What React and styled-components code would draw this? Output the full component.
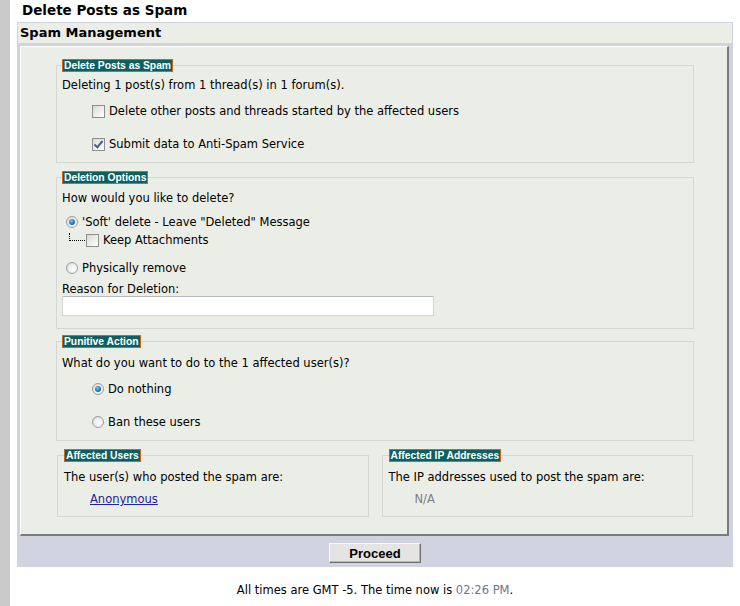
import React from 'react'
import styled, { createGlobalStyle } from 'styled-components'

const GlobalStyle = createGlobalStyle`
    html, body {
        margin:0;
        padding:0;
        background:#fff;
    }
    body {
        font-family:"DejaVu Sans", Verdana, sans-serif;
        font-size:11.5px;
        color:#000;
    }
`

const Page = styled.div`
    display:flex;
    min-height:606px;
`
const Rail = styled.div`
    width:10px;
    flex-shrink:0;
    background:#cacaca;
`
const Main = styled.main`
    flex:1;
    padding:0 7px;
`
const PageTitle = styled.h1`
    margin:0;
    height:22px;
    padding:2px 0 0 5px;
    box-sizing:border-box;
    font-size:13.5px;
    line-height:16px;
    font-weight:700;
`
const Frame = styled.div`
    border:1px solid #d1d3e0;
    background:#d1d3e0;
`
const FrameHeader = styled.div`
    height:20px;
    padding-left:2px;
    background:#ebeee7;
    font-size:13px;
    font-weight:700;
    line-height:20px;
`
const Panel = styled.div`
    margin:3px 3px 0 2px;
    padding:12px 33px 17px 35px;
    background:#ebeee7;
    border-top:1px solid #fff;
    border-left:1px solid #fff;
    border-right:2px solid #7b7b7b;
    border-bottom:2px solid #7b7b7b;
`
const Group = styled.fieldset`
    margin:${p => p.$mt || 0}px 0 0;
    padding:0 5px ${p => p.$pb || 0}px ${p => p.$pl || 5}px;
    min-width:0;
    border:1px solid #d5d8d1;
`
const Legend = styled.legend`
    margin-left:0;
    padding:0 1px;
    background:#0e5f5f;
    border:1px solid #c8661c;
    color:#fff;
    font-family:"Liberation Sans", Arial, sans-serif;
    font-size:10.3px;
    font-weight:700;
    line-height:11px;
`
const Line = styled.div`
    display:flex;
    align-items:center;
    gap:4px;
    height:14px;
    line-height:14px;
    margin-top:${p => p.$mt || 0}px;
    padding-left:${p => p.$indent || 0}px;
    white-space:nowrap;
`
const Check = styled.input.attrs({ type: 'checkbox' })`
    appearance:none;
    position:relative;
    width:13px;
    height:13px;
    margin:0;
    flex-shrink:0;
    border:1px solid #8e8f8f;
    background:linear-gradient(135deg, #d9d9d4 0%, #f4f4f1 70%, #fff 100%);
    box-sizing:border-box;

    &:checked::after{
        content:'';
        position:absolute;
        left:3px;
        top:0px;
        width:3px;
        height:7px;
        border:solid #4b5d97;
        border-width:0 2px 2px 0;
        transform:rotate(40deg);
    }
`
const Radio = styled.input.attrs({ type: 'radio' })`
    appearance:none;
    position:relative;
    width:12px;
    height:12px;
    margin:0;
    flex-shrink:0;
    border:1px solid #9c9c9c;
    border-radius:50%;
    background:radial-gradient(circle at 65% 65%, #fff 0%, #ececec 55%, #cfcfcf 100%);
    box-sizing:border-box;

    &:checked::after{
        content:'';
        position:absolute;
        left:2px;
        top:2px;
        width:6px;
        height:6px;
        border-radius:50%;
        background:radial-gradient(circle at 40% 35%, #7fc4ee 0%, #1f78b8 55%, #0d4f86 100%);
    }
`
const TreeLine = styled.span`
    align-self:flex-start;
    width:15px;
    height:7px;
    margin-left:7px;
    margin-right:-3px;
    border-left:1px dotted #000;
    border-bottom:1px dotted #000;
`
const TextInput = styled.input`
    display:block;
    width:372px;
    height:20px;
    margin:0;
    padding:0 3px;
    box-sizing:border-box;
    border:1px solid #d4d4d4;
    border-top-color:#b9b9b9;
    background:#fff;
    font:inherit;
`
const Pair = styled.div`
    display:grid;
    grid-template-columns:1fr 1fr;
    gap:13px;
    margin-top:8px;
    padding:0 1px;
`
const Link = styled.a`
    color:#22229c;
    text-decoration:underline;
`
const Muted = styled.span`
    color:#808080;
`
const ButtonBar = styled.div`
    display:flex;
    justify-content:center;
    padding:7px 0 3px;
`
const Button = styled.button`
    width:92px;
    height:20px;
    padding:0;
    background:#e4e4e2;
    border:1px solid;
    border-color:#fafafa #6f6f6f #6f6f6f #fafafa;
    box-shadow:inset -1px -1px 0 #b5b5b5;
    font-family:"Liberation Sans", Arial, sans-serif;
    font-size:13px;
    font-weight:700;
    color:#000;
`
const Footer = styled.div`
    margin-top:16px;
    text-align:center;
    line-height:14px;
`
const Time = styled.span`
    color:#78708f;
`

export default function App(){
    return (
        <Page>
            <GlobalStyle/>
            <Rail/>
            <Main>
                <PageTitle>Delete Posts as Spam</PageTitle>
                <Frame>
                    <FrameHeader>Spam Management</FrameHeader>
                    <Panel>
                        <Group $pb={11}>
                            <Legend>Delete Posts as Spam</Legend>
                            <Line $mt={6}>Deleting 1 post(s) from 1 thread(s) in 1 forum(s).</Line>
                            <Line $mt={12} $indent={30}><Check/>Delete other posts and threads started by the affected users</Line>
                            <Line $mt={19} $indent={30}><Check defaultChecked/>Submit data to Anti-Spam Service</Line>
                        </Group>

                        <Group $mt={8} $pb={12}>
                            <Legend>Deletion Options</Legend>
                            <Line $mt={7}>How would you like to delete?</Line>
                            <Line $mt={10} $indent={4}><Radio name="deletetype" defaultChecked/>'Soft' delete - Leave "Deleted" Message</Line>
                            <Line $mt={4}><TreeLine/><Check/>Keep Attachments</Line>
                            <Line $mt={14} $indent={4}><Radio name="deletetype"/>Physically remove</Line>
                            <Line $mt={7}>Reason for Deletion:</Line>
                            <TextInput type="text"/>
                        </Group>

                        <Group $mt={6} $pb={11}>
                            <Legend>Punitive Action</Legend>
                            <Line $mt={8}>What do you want to do to the 1 affected user(s)?</Line>
                            <Line $mt={12} $indent={30}><Radio name="punitive" defaultChecked/>Do nothing</Line>
                            <Line $mt={19} $indent={30}><Radio name="punitive"/>Ban these users</Line>
                        </Group>

                        <Pair>
                            <Group $pb={10} $pl={6}>
                                <Legend>Affected Users</Legend>
                                <Line $mt={8}>The user(s) who posted the spam are:</Line>
                                <Line $mt={8} $indent={26}><Link href="#">Anonymous</Link></Line>
                            </Group>
                            <Group $pb={10} $pl={6}>
                                <Legend>Affected IP Addresses</Legend>
                                <Line $mt={8}>The IP addresses used to post the spam are:</Line>
                                <Line $mt={8} $indent={26}><Muted>N/A</Muted></Line>
                            </Group>
                        </Pair>
                    </Panel>
                    <ButtonBar>
                        <Button type="button">Proceed</Button>
                    </ButtonBar>
                </Frame>
                <Footer>All times are GMT -5. The time now is <Time>02:26 PM</Time>.</Footer>
            </Main>
        </Page>
    )
}
